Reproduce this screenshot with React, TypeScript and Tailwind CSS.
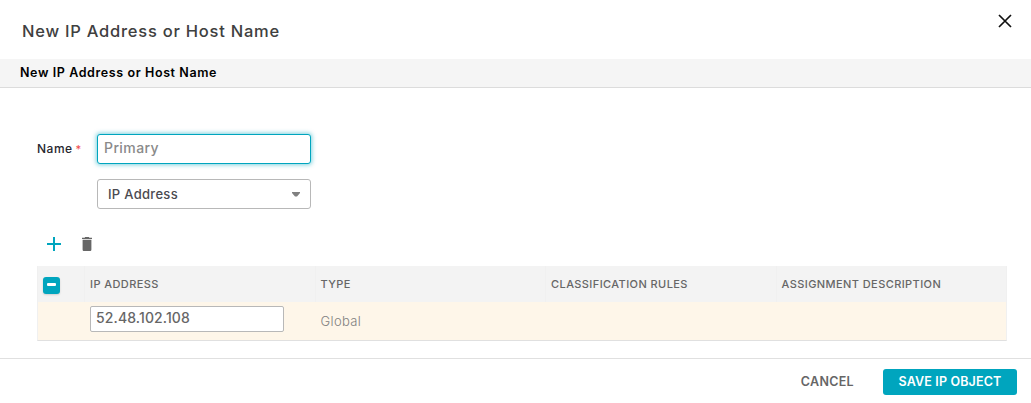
import React from "react";

const columns = ["IP ADDRESS", "TYPE", "CLASSIFICATION RULES", "ASSIGNMENT DESCRIPTION"];

function CloseIcon() {
  return (
    <svg width="14" height="14" viewBox="0 0 14 14" stroke="#111" strokeWidth="1.7" fill="none">
      <path d="M1 1 13 13M13 1 1 13" />
    </svg>
  );
}

function PlusIcon() {
  return (
    <svg width="14" height="14" viewBox="0 0 14 14" fill="#00a5be">
      <path d="M6 0h2v6h6v2H8v6H6V8H0V6h6z" />
    </svg>
  );
}

function TrashIcon() {
  return (
    <svg width="10" height="14" viewBox="0 0 10 14" fill="#666">
      <path d="M3.200 0h3.600l.6.7H10V2H0V.7h2.600zM.6 2.800h8.800v9.600c0 .9-.6 1.600-1.500 1.600H2.100C1.200 14 .6 13.300.6 12.400z" />
    </svg>
  );
}

export default function App() {
  return (
    <div className="flex h-[403px] w-[1031px] flex-col bg-white font-['Inter',sans-serif] font-medium">
      <header className="flex h-[59px] shrink-0 items-start justify-between pl-[22px] pr-[19px]">
        <h1 className="mt-[20px] whitespace-nowrap text-[16.5px] leading-[22px] tracking-[0.76px] text-[#404040]">
          New IP Address or Host Name
        </h1>
        <button aria-label="Close" className="mt-[14px]">
          <CloseIcon />
        </button>
      </header>
      <div className="flex h-[29px] shrink-0 items-center border-b border-[#dcdcdc] bg-[#f5f5f5] pl-5">
        <h2 className="whitespace-nowrap text-[12.5px] font-semibold leading-[18px] tracking-[0.6px] text-black">
          New IP Address or Host Name
        </h2>
      </div>

      <main className="flex h-[270px] shrink-0 flex-col pl-[37px] pr-[24px] pt-[46px]">
        <div className="flex h-[30px] items-center">
          <label className="flex w-[60px] text-[12px] leading-[16px] tracking-[0.5px] text-[#26262e]">
            Name<span className="ml-[3px] text-[11px] text-[#f0504f]">*</span>
          </label>
          <input
            placeholder="Primary"
            className="h-[30px] w-[214px] rounded-[3px] border border-[#00a5be] bg-white px-[6px] pb-[3px] text-[14px] tracking-[0.4px] shadow-[0_0_4px_1px_rgba(0,165,190,0.5)] outline-none placeholder:text-[#8a8a8a]"
          />
        </div>
        <button className="ml-[60px] mt-[15px] flex h-[30px] w-[214px] shrink-0 items-center justify-between rounded-[3px] border border-[#b8b8b8] bg-white px-[10px] text-[#4a4a50]">
          <span className="text-[13px] leading-[18px] tracking-[0.3px]">IP Address</span>
          <svg width="8" height="5" viewBox="0 0 8 5" fill="#808080">
            <path d="M0 0h8v1L5 4.600H3L0 1z" />
          </svg>
        </button>
        <div className="mt-[28px] flex h-[14px] shrink-0 items-center gap-[21px] pl-[10px]">
          <button aria-label="Add"><PlusIcon /></button>
          <button aria-label="Delete"><TrashIcon /></button>
        </div>

        <section className="mt-[15px] w-[970px] shrink-0 border-x border-b border-x-[#f0f0f0] border-b-[#e0e0e0] bg-[#fef6e9]">
          <div className="grid h-[36px] grid-cols-[46px_230.5px_230.5px_230.5px_230.5px] items-center bg-[#f3f3f3] text-[11px] leading-[16px] text-[#666]">
            <span className="ml-[5px] mt-[2px] flex h-[17px] w-[17px] items-center justify-center rounded-[3px] bg-[#00a5be] shadow-[0_1px_2px_rgba(0,0,0,0.15)]">
              <span className="mb-px h-[3px] w-[9px] rounded-[1px] bg-white" />
            </span>
            {columns.map((column) => (
              <span key={column} className="flex h-full items-center whitespace-nowrap border-l border-[#f0f0f0] pl-[5px] tracking-[0.42px]">
                {column}
              </span>
            ))}
          </div>
          <div className="grid h-[38px] grid-cols-[46px_230.5px_230.5px_461px] items-start">
            <span />
            <input
              defaultValue="52.48.102.108"
              className="ml-[6px] mt-[4px] h-[26px] w-[194px] rounded-[2px] border border-[#b8b8b8] bg-white px-[5px] pb-[3px] text-[14px] tracking-[0.12px] text-[#666] outline-none"
            />
            <span className="pl-[6px] pt-[10px] text-[13px] font-light leading-[18px] tracking-[0.35px] text-[#808080]">Global</span>
          </div>
        </section>
      </main>

      <footer className="flex h-[45px] shrink-0 items-center justify-end gap-[29px] border-t border-[#e0e0e0] pr-[14px] pt-[2px] text-[12.5px] font-semibold">
        <button className="whitespace-nowrap tracking-[0.3px] text-[#666]">CANCEL</button>
        <button className="h-[26px] w-[134px] whitespace-nowrap rounded-[3px] bg-[#00a5be] tracking-[0.15px] text-white">SAVE IP OBJECT</button>
      </footer>
    </div>
  );
}
